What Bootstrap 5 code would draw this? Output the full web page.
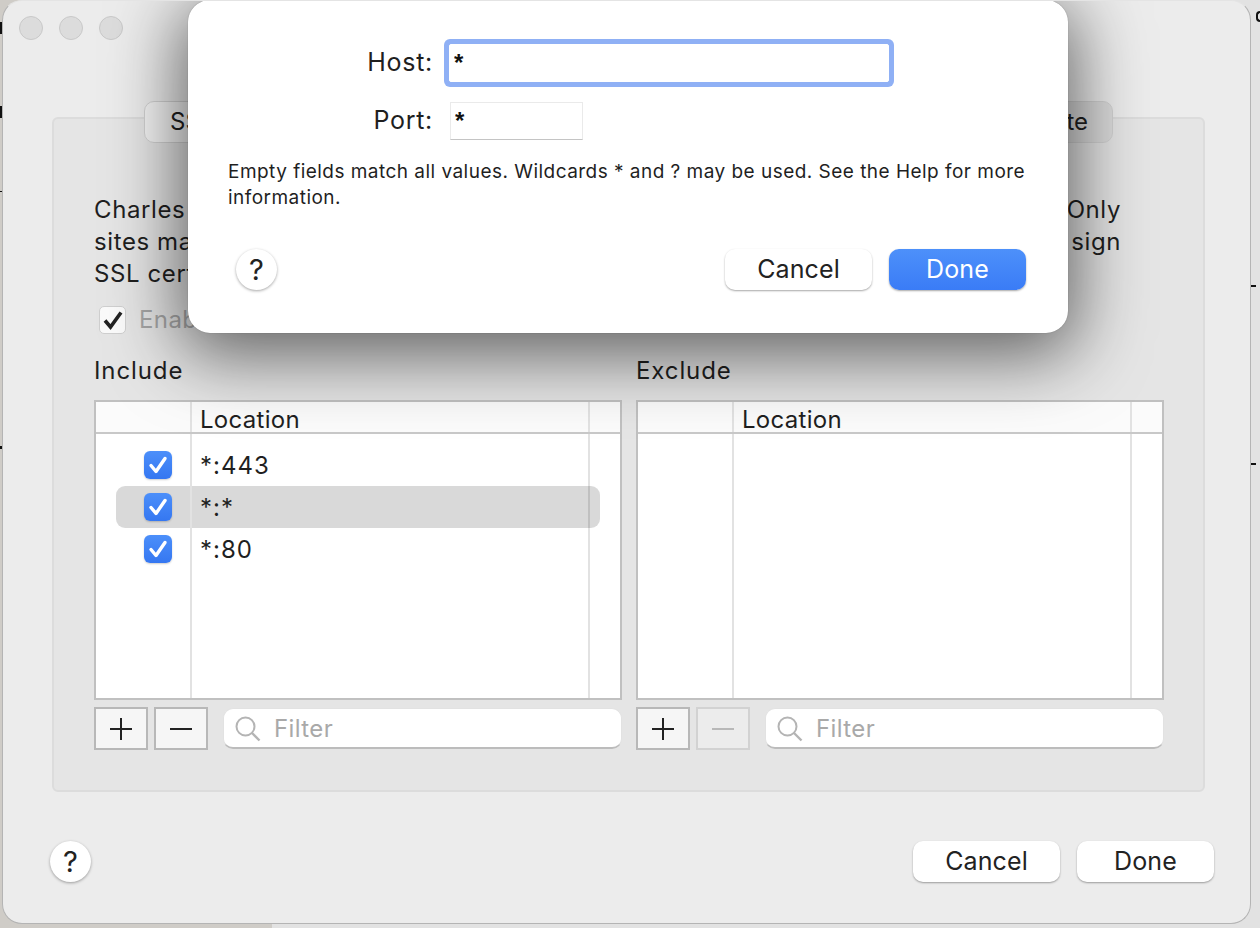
<!DOCTYPE html>
<html lang="en">
<head>
  <meta charset="UTF-8" />
  <meta name="viewport" content="width=device-width, initial-scale=1.0"/>
  <title>SSL Proxying Settings</title>
  <link href="https://cdn.jsdelivr.net/npm/bootstrap@5.3.0/dist/css/bootstrap.min.css" rel="stylesheet"/>
  <style>
    html, body { height: 100%; }
    body { position: relative; background: linear-gradient(90deg, #cfccc7 272px, #e2e2e2 272px); font-family: Inter, "Liberation Sans", sans-serif; color: #1f1f1f; overflow: hidden; }
    /* bits of the desktop showing round the window */
    .spk { position: absolute; background: #111; }
    .s1 { left: 0; top: 22px; width: 3px; height: 12px; }
    .s2 { left: 0; top: 106px; width: 2px; height: 12px; }
    .s3 { left: 0; top: 191px; width: 3px; height: 1px; }
    .s4 { left: 0; top: 446px; width: 2px; height: 3px; }
    .s5 { left: 1251px; top: 285px; width: 5px; height: 2px; }
    .s6 { left: 1251px; top: 463px; width: 5px; height: 2px; }
    .s7 { left: 1256px; top: 11px; width: 4px; height: 11px; background: none; border: 2px solid #111; border-right: 0; border-radius: 5px 0 0 5px; }
    .win { position: relative; width: 1249px; height: 924px; margin-left: 2px; background: #ececec; border: 1px solid #b4b4b4; border-top-color: #e4e4e4; border-radius: 20px; overflow: hidden; padding: 0 45px 0 49px; }
    .lights { height: 100px; padding-top: 15px; margin-left: -33px; gap: 16px; }
    .light { width: 24px; height: 24px; border-radius: 50%; background: #dcdcdc; border: 1px solid #c8c8c8; }
    .seg-bar { height: 42px; margin: 0 0 -26px; position: relative; z-index: 1; }
    .seg { height: 42px; width: 323px; border: 1px solid #d2d2d2; background: #dcdcdc; font-size: 24px; display: flex; align-items: center; justify-content: center; white-space: nowrap; }
    .seg:first-child { border-radius: 10px 0 0 10px; background: #f4f4f4; justify-content: flex-start; padding-left: 25px; }
    .seg:last-child { border-radius: 0 10px 10px 0; justify-content: flex-end; padding-right: 24px; }
    .grp { height: 675px; background: #e5e5e5; border: 2px solid #dcdcdc; border-radius: 6px; padding: 75px 38px 0 40px; }
    .intro { font-size: 24px; line-height: 32px; letter-spacing: .6px; height: 96px; padding-right: 44px; }
    .intro div { white-space: nowrap; }
    .enable { margin: 16px 0 0 5px; height: 28px; gap: 13px; font-size: 24px; color: #a5a5a5; letter-spacing: .4px; }
    .cb-off { width: 27px; height: 28px; background: #fafafa; border: 1px solid #cfcfcf; border-radius: 5px; }
    .cols { margin-top: 21px; gap: 14px; }
    .col-box { width: 528px; }
    .cap { font-size: 24px; line-height: 32px; height: 32px; margin-bottom: 13px; letter-spacing: .9px; }
    .tbl { height: 300px; background: #fff; border: 2px solid #c0c0c0; }
    .t-row { display: flex; flex: none; position: relative; }
    .t-head { height: 32px; border-bottom: 2px solid #c8c8c8; font-size: 24px; line-height: 35px; background: #fbfbfb; }
    .t-gap { height: 10px; }
    .t-item { height: 42px; font-size: 24px; letter-spacing: 1px; line-height: 44px; }
    .t-fill { flex: 1 1 auto; }
    .t-sel::before { content: ""; position: absolute; left: 20px; right: 20px; top: 0; bottom: 0; background: rgba(0,0,0,.15); border-radius: 9px; }
    .c-check { width: 96px; flex: none; border-right: 2px solid #e2e2e2; display: flex; align-items: center; justify-content: flex-end; padding-right: 18px; position: relative; }
    .c-loc { flex: 1 1 auto; padding-left: 8px; position: relative; }
    .c-end { width: 32px; flex: none; border-left: 2px solid #e2e2e2; }
    .t-head .c-loc { letter-spacing: .3px; }
    .cb-on { width: 28px; height: 28px; border-radius: 6px; background: linear-gradient(#4c8ffa, #3577f1); box-shadow: 0 1px 2px rgba(0,0,0,.2); display: flex; align-items: center; justify-content: center; }
    .tools { margin-top: 7px; height: 43px; }
    .sq { width: 54px; height: 43px; padding: 0; background: #f6f6f6; border: 2px solid #b8b8b8; border-radius: 0; display: flex; align-items: center; justify-content: center; }
    .sq + .sq { margin-left: 6px; }
    .sq:disabled { opacity: 1; background: #ececec; border-color: #d2d2d2; }
    .filter { margin-left: 15px; margin-top: 1px; flex: 1 1 auto; height: 41px; background: #fff; border-radius: 10px; border: 1px solid #e2e2e2; border-bottom: 2px solid #bcbcbc; padding: 2px 0 0 11px; gap: 13px; font-size: 24px; letter-spacing: .4px; color: #a9a9a9; }
    .foot { height: 41px; margin: 49px -9px 0 0; }
    .q { width: 41px; height: 41px; padding: 0; border-radius: 50%; background: #fff; border: 0; color: #222; font-size: 29px; font-weight: 400; line-height: 41px; box-shadow: 0 1px 3px rgba(0,0,0,.35); }
    .mac-btn { height: 41px; padding: 0; background: #fff; border: 0; border-radius: 10px; color: #222; font-size: 25px; line-height: 41px; letter-spacing: .1px; box-shadow: 0 1px 2px rgba(0,0,0,.35); }
    .mac-btn:hover { background: #fff; color: #222; }
    .w-cancel { width: 147px; }
    .w-done { width: 137px; }
    .foot .q { margin-left: -2px; }
    .foot .w-done { margin-left: 17px; }
    .sheet { position: absolute; left: 185px; top: -1px; width: 880px; height: 333px; background: #fff; border-radius: 22px; box-shadow: 0 0 1px rgba(0,0,0,.4), 0 14px 70px 8px rgba(0,0,0,.58); padding: 44px 41px 0 40px; z-index: 2; }
    .s-row { gap: 16px; font-size: 25px; letter-spacing: .7px; }
    .s-lbl { width: 205px; text-align: right; }
    .s-host { height: 38px; }
    .s-port { height: 38px; margin-top: 20px; }
    .fld { height: 38px; padding: 0 4px; background: #fff; font-family: "Liberation Sans", sans-serif; font-weight: 700; font-size: 24px; line-height: 38px; border-radius: 0; border: 1px solid #eaeaea; border-bottom: 1px solid #c4c4c4; color: #111; box-shadow: none; }
    .fld:focus, .fld-focus { border-color: #fff; box-shadow: 0 0 0 5px #8fb0f5; border-radius: 2px; }
    .f-host { width: 440px; }
    .f-port { width: 133px; margin-left: 1px; }
    .help { margin: 19px 0 0; font-size: 19px; line-height: 26px; letter-spacing: .47px; height: 52px; white-space: nowrap; }
    .s-foot { margin-top: 38px; padding: 0 1px 0 8px; }
    .btn-def { background: linear-gradient(#4d90fa, #3a7cf6); color: #fff; }
    .btn-def:hover { background: linear-gradient(#4d90fa, #3a7cf6); color: #fff; }
    .s-foot .w-done { margin-left: 17px; }
  </style>
</head>
<body>
  <span class="spk s1"></span><span class="spk s2"></span><span class="spk s3"></span><span class="spk s4"></span>
  <span class="spk s5"></span><span class="spk s6"></span><span class="spk s7"></span>

  <div class="win">
    <div class="lights d-flex">
      <span class="light"></span><span class="light"></span><span class="light"></span>
    </div>

    <div class="seg-bar d-flex justify-content-center">
      <div class="seg">SS</div>
      <div class="seg"></div>
      <div class="seg">te</div>
    </div>

    <div class="grp">
      <div class="intro">
        <div class="d-flex justify-content-between"><span>Charles</span><span>Only</span></div>
        <div class="d-flex justify-content-between"><span>sites ma</span><span>sign</span></div>
        <div>SSL cert</div>
      </div>

      <div class="enable d-flex align-items-center">
        <span class="cb-off d-flex align-items-center justify-content-center">
          <svg width="22" height="22" viewBox="0 0 22 22"><path d="M3 11.5l5.5 6.5L19 3.5" fill="none" stroke="#222" stroke-width="3.6"/></svg>
        </span>
        <span>Enable</span>
      </div>

      <div class="cols d-flex">
        <div class="col-box">
          <div class="cap">Include</div>
          <div class="tbl d-flex flex-column">
            <div class="t-row t-head"><div class="c-check"></div><div class="c-loc">Location</div><div class="c-end"></div></div>
            <div class="t-row t-gap"><div class="c-check"></div><div class="c-loc"></div><div class="c-end"></div></div>
            <div class="t-row t-item"><div class="c-check"><span class="cb-on"><svg width="22" height="22" viewBox="0 0 22 22"><path d="M4 11.5l5 6L18 4.5" fill="none" stroke="#fff" stroke-width="3.4" stroke-linecap="round" stroke-linejoin="round"/></svg></span></div><div class="c-loc">*:443</div><div class="c-end"></div></div>
            <div class="t-row t-item t-sel"><div class="c-check"><span class="cb-on"><svg width="22" height="22" viewBox="0 0 22 22"><path d="M4 11.5l5 6L18 4.5" fill="none" stroke="#fff" stroke-width="3.4" stroke-linecap="round" stroke-linejoin="round"/></svg></span></div><div class="c-loc">*:*</div><div class="c-end"></div></div>
            <div class="t-row t-item"><div class="c-check"><span class="cb-on"><svg width="22" height="22" viewBox="0 0 22 22"><path d="M4 11.5l5 6L18 4.5" fill="none" stroke="#fff" stroke-width="3.4" stroke-linecap="round" stroke-linejoin="round"/></svg></span></div><div class="c-loc">*:80</div><div class="c-end"></div></div>
            <div class="t-row t-fill"><div class="c-check"></div><div class="c-loc"></div><div class="c-end"></div></div>
          </div>
          <div class="tools d-flex">
            <button class="btn sq" type="button"><svg width="24" height="24" viewBox="0 0 24 24"><path d="M12 1v22M1 12h22" stroke="#222" stroke-width="2"/></svg></button>
            <button class="btn sq" type="button"><svg width="24" height="24" viewBox="0 0 24 24"><path d="M1 12h22" stroke="#222" stroke-width="2"/></svg></button>
            <div class="filter d-flex align-items-center">
              <svg width="26" height="26" viewBox="0 0 26 26"><circle cx="10.5" cy="10.5" r="9" fill="none" stroke="#b4b4b4" stroke-width="2"/><path d="M17 17l7.5 7.5" stroke="#b4b4b4" stroke-width="2.4"/></svg>
              <span>Filter</span>
            </div>
          </div>
        </div>

        <div class="col-box">
          <div class="cap">Exclude</div>
          <div class="tbl d-flex flex-column">
            <div class="t-row t-head"><div class="c-check"></div><div class="c-loc">Location</div><div class="c-end"></div></div>
            <div class="t-row t-fill"><div class="c-check"></div><div class="c-loc"></div><div class="c-end"></div></div>
          </div>
          <div class="tools d-flex">
            <button class="btn sq" type="button"><svg width="24" height="24" viewBox="0 0 24 24"><path d="M12 1v22M1 12h22" stroke="#222" stroke-width="2"/></svg></button>
            <button class="btn sq" type="button" disabled><svg width="24" height="24" viewBox="0 0 24 24"><path d="M1 12h22" stroke="#b8b8b8" stroke-width="2"/></svg></button>
            <div class="filter d-flex align-items-center">
              <svg width="26" height="26" viewBox="0 0 26 26"><circle cx="10.5" cy="10.5" r="9" fill="none" stroke="#b4b4b4" stroke-width="2"/><path d="M17 17l7.5 7.5" stroke="#b4b4b4" stroke-width="2.4"/></svg>
              <span>Filter</span>
            </div>
          </div>
        </div>
      </div>
    </div>

    <div class="foot d-flex align-items-center">
      <button class="btn q" type="button">?</button>
      <div class="ms-auto d-flex">
        <button class="btn mac-btn w-cancel" type="button">Cancel</button>
        <button class="btn mac-btn w-done" type="button">Done</button>
      </div>
    </div>

    <div class="sheet">
      <div class="s-row s-host d-flex align-items-center">
        <span class="s-lbl">Host:</span>
        <input class="form-control fld fld-focus f-host" type="text" value="*"/>
      </div>
      <div class="s-row s-port d-flex align-items-center">
        <span class="s-lbl">Port:</span>
        <input class="form-control fld f-port" type="text" value="*"/>
      </div>
      <p class="help">Empty fields match all values. Wildcards * and ? may be used. See the Help for more<br/>information.</p>
      <div class="s-foot d-flex align-items-center">
        <button class="btn q" type="button">?</button>
        <div class="ms-auto d-flex">
          <button class="btn mac-btn w-cancel" type="button">Cancel</button>
          <button class="btn mac-btn btn-def w-done" type="button">Done</button>
        </div>
      </div>
    </div>
  </div>
</body>
</html>
